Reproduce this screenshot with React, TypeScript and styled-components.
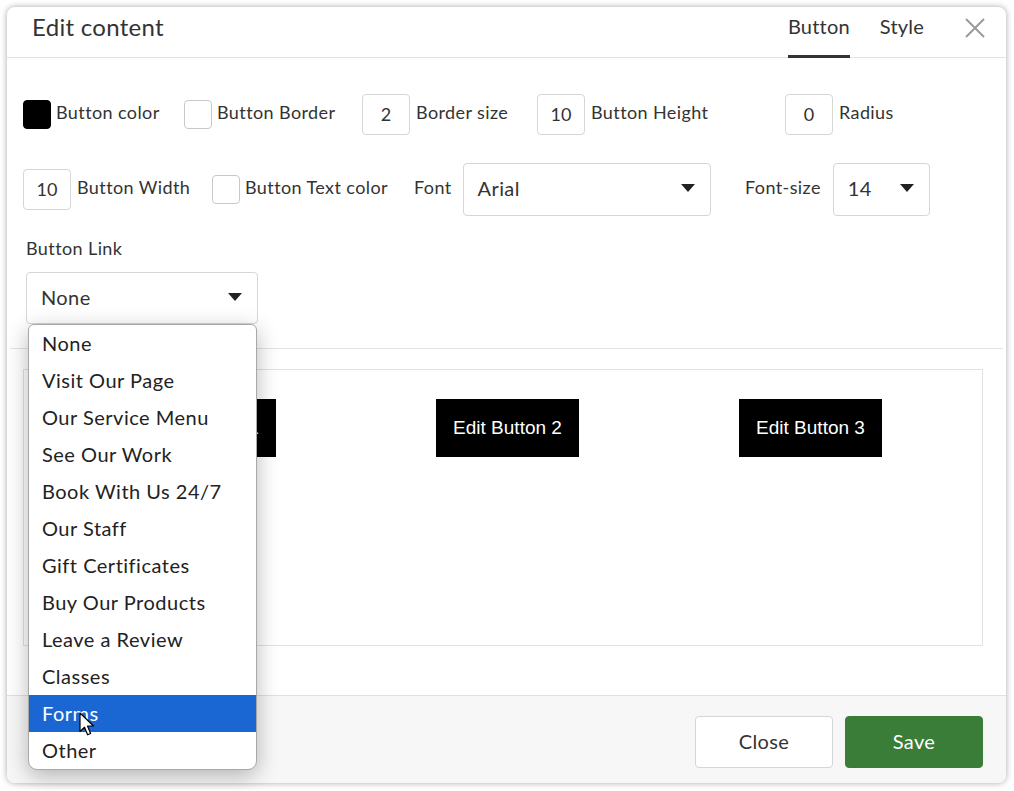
import React from "react";
import styled, { createGlobalStyle } from "styled-components";

const Global = createGlobalStyle`
  html, body { margin: 0; padding: 0; background: #ffffff; }
  body { font-family: "Lato", "Open Sans", sans-serif; color: #333; }
  * { box-sizing: border-box; }
`;

const Page = styled.div`
  padding: 7px;
`;

const Modal = styled.div`
  position: relative;
  width: 999px;
  height: 776px;
  background: #fff;
  border-radius: 8px;
  box-shadow: 0 0 6px rgba(0, 0, 0, 0.35);
  display: flex;
  flex-direction: column;
`;

const Header = styled.div`
  height: 51px;
  border-bottom: 1px solid #e2e2e2;
  display: flex;
  align-items: stretch;
  padding: 0 20px 0 25px;
`;

const Title = styled.div`
  flex: 1;
  font-size: 24px;
  line-height: 26px;
  letter-spacing: 0.3px;
  padding-top: 7px;
  color: #333;
`;

const Tabs = styled.div`
  display: flex;
  gap: 30px;
  margin-right: 40px;
`;

const Tab = styled.div<{ $active?: boolean }>`
  font-size: 20px;
  line-height: 26px;
  padding-top: 6px;
  letter-spacing: 0.2px;
  color: #333;
  margin-bottom: -1px;
  border-bottom: 3px solid ${(p) => (p.$active ? "#333" : "transparent")};
`;

const CloseX = styled.button`
  border: none;
  background: none;
  padding: 0;
  width: 22px;
  height: 22px;
  margin-top: 10px;
  cursor: pointer;
  display: flex;
`;

const Body = styled.div`
  flex: 1;
  padding: 36px 23px 0 16px;
  display: flex;
  flex-direction: column;
`;

const Row = styled.div<{ $h: number; $mt?: number }>`
  display: flex;
  align-items: center;
  height: ${(p) => p.$h}px;
  margin-top: ${(p) => p.$mt ?? 0}px;
`;

const Field = styled.div<{ $w?: number }>`
  display: flex;
  align-items: center;
  gap: 6px;
  ${(p) => (p.$w ? `width: ${p.$w}px; flex: none;` : "flex: 1;")}
`;

const Swatch = styled.div<{ $color: string }>`
  width: 28px;
  height: 29px;
  border-radius: 4px;
  border: 1px solid ${(p) => (p.$color === "#000" ? "#000" : "#c8c8c8")};
  background: ${(p) => p.$color};
  margin-right: -1px;
`;

const NumBox = styled.div`
  width: 48px;
  height: 41px;
  border: 1px solid #d6d6d6;
  border-radius: 4px;
  display: flex;
  align-items: center;
  justify-content: center;
  font-size: 18px;
  padding-bottom: 1px;
  color: #333;
`;

const Label = styled.span`
  font-size: 18px;
  letter-spacing: 0.4px;
  color: #333;
  white-space: nowrap;
  margin-bottom: 5px;
`;

const SelectBox = styled.div<{ $w: number; $h: number; $ml?: number }>`
  width: ${(p) => p.$w}px;
  height: ${(p) => p.$h}px;
  margin-left: ${(p) => p.$ml ?? 0}px;
  flex: none;
  border: 1px solid #d6d6d6;
  border-radius: 4px;
  display: flex;
  align-items: center;
  justify-content: space-between;
  padding: 0 15px 2px 14px;
  font-size: 20px;
  letter-spacing: 0.4px;
  color: #333;
  background: #fff;
`;

const Caret = () => (
  <svg width="14" height="8" viewBox="0 0 14 8">
    <path d="M0 0 L14 0 L7 8 Z" fill="#222" />
  </svg>
);

const LinkSection = styled.div`
  margin-top: 22px;
  padding-left: 3px;
  position: relative;
  width: 234px;
`;

const LinkLabel = styled.div`
  font-size: 18px;
  letter-spacing: 0.4px;
  line-height: 22px;
  color: #333;
  margin-bottom: 13px;
`;

const Dropdown = styled.ul`
  position: absolute;
  left: 5px;
  top: 87px;
  width: 229px;
  margin: 0;
  padding: 0;
  list-style: none;
  background: #fff;
  border: 1px solid #a8a8a8;
  border-radius: 6px 6px 9px 9px;
  box-shadow: 0 6px 22px rgba(0, 0, 0, 0.28);
  z-index: 5;
  overflow: hidden;
`;

const Item = styled.li<{ $active?: boolean }>`
  position: relative;
  height: 37px;
  line-height: 36px;
  padding-left: 13px;
  font-size: 20px;
  letter-spacing: 0.5px;
  color: ${(p) => (p.$active ? "#fff" : "#222")};
  background: ${(p) => (p.$active ? "#1a66d2" : "transparent")};
`;

const Pointer = styled.svg`
  position: absolute;
  left: 50px;
  top: 17px;
`;

const Divider = styled.div`
  height: 1px;
  background: #e2e2e2;
  margin: 24px -20px 0 -13px;
`;

const Preview = styled.div`
  margin-top: 20px;
  height: 277px;
  border: 1px solid #e2e2e2;
  display: grid;
  grid-template-columns: repeat(3, 303px);
  align-items: start;
  justify-items: center;
  padding: 29px 0 0 29px;
`;

const DemoButton = styled.div`
  width: 143px;
  height: 58px;
  background: #000;
  color: #fff;
  font-family: "Liberation Sans", Arial, sans-serif;
  font-size: 19px;
  display: flex;
  align-items: center;
  justify-content: center;
`;

const Footer = styled.div`
  height: 88px;
  border-top: 1px solid #e0e0e0;
  background: #f7f7f7;
  border-radius: 0 0 8px 8px;
  display: flex;
  justify-content: flex-end;
  align-items: flex-start;
  gap: 12px;
  padding: 20px 23px 0 0;
`;

const FootButton = styled.button<{ $primary?: boolean }>`
  width: 138px;
  height: 52px;
  border-radius: 4px;
  font-family: inherit;
  font-size: 20px;
  letter-spacing: 0.4px;
  padding-bottom: 3px;
  cursor: pointer;
  border: 1px solid ${(p) => (p.$primary ? "#3a7d39" : "#d6d6d6")};
  background: ${(p) => (p.$primary ? "#3a7d39" : "#fff")};
  color: ${(p) => (p.$primary ? "#fff" : "#333")};
`;

const links = [
  "None",
  "Visit Our Page",
  "Our Service Menu",
  "See Our Work",
  "Book With Us 24/7",
  "Our Staff",
  "Gift Certificates",
  "Buy Our Products",
  "Leave a Review",
  "Classes",
  "Forms",
  "Other",
];

export default function App() {
  return (
    <>
      <Global />
      <Page>
        <Modal>
          <Header>
            <Title>Edit content</Title>
            <Tabs>
              <Tab $active>Button</Tab>
              <Tab>Style</Tab>
            </Tabs>
            <CloseX aria-label="Close">
              <svg width="22" height="22" viewBox="0 0 22 22">
                <path d="M2 2 L20 20 M20 2 L2 20" stroke="#9a9a9a" strokeWidth="2" />
              </svg>
            </CloseX>
          </Header>
          <Body>
            <Row $h={40}>
              <Field $w={161}>
                <Swatch $color="#000" />
                <Label>Button color</Label>
              </Field>
              <Field $w={178}>
                <Swatch $color="#fff" />
                <Label>Button Border</Label>
              </Field>
              <Field $w={175}>
                <NumBox>2</NumBox>
                <Label>Border size</Label>
              </Field>
              <Field $w={248}>
                <NumBox>10</NumBox>
                <Label>Button Height</Label>
              </Field>
              <Field>
                <NumBox>0</NumBox>
                <Label>Radius</Label>
              </Field>
            </Row>
            <Row $h={52} $mt={29}>
              <Field $w={189}>
                <NumBox>10</NumBox>
                <Label>Button Width</Label>
              </Field>
              <Field $w={202}>
                <Swatch $color="#fff" />
                <Label>Button Text color</Label>
              </Field>
              <Field $w={331}>
                <Label>Font</Label>
                <SelectBox $w={248} $h={53} $ml={5}>
                  Arial
                  <Caret />
                </SelectBox>
              </Field>
              <Field>
                <Label>Font-size</Label>
                <SelectBox $w={97} $h={53} $ml={6}>
                  14
                  <Caret />
                </SelectBox>
              </Field>
            </Row>
            <LinkSection>
              <LinkLabel>Button Link</LinkLabel>
              <SelectBox $w={232} $h={52}>
                None
                <Caret />
              </SelectBox>
              <Dropdown>
                {links.map((l) => (
                  <Item key={l} $active={l === "Forms"}>
                    {l}
                    {l === "Forms" && (
                      <Pointer width="17" height="26" viewBox="0 0 17 26">
                        <path
                          d="M1 1 L1 19.5 L5.5 15.2 L8.6 22.8 L11.6 21.5 L8.5 14 L14.5 14 Z"
                          fill="#fff"
                          stroke="#000"
                          strokeWidth="1.2"
                          strokeLinejoin="round"
                        />
                      </Pointer>
                    )}
                  </Item>
                ))}
              </Dropdown>
            </LinkSection>
            <Divider />
            <Preview>
              <DemoButton>Edit Button 1</DemoButton>
              <DemoButton>Edit Button 2</DemoButton>
              <DemoButton>Edit Button 3</DemoButton>
            </Preview>
          </Body>
          <Footer>
            <FootButton>Close</FootButton>
            <FootButton $primary>Save</FootButton>
          </Footer>
        </Modal>
      </Page>
    </>
  );
}
